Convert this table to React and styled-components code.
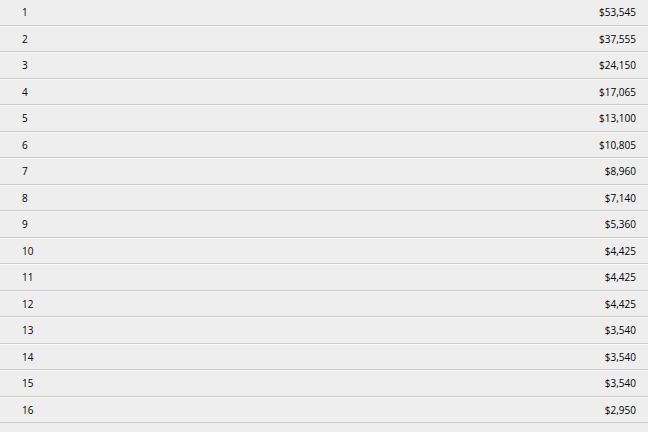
import React from 'react';
import styled, { createGlobalStyle } from "styled-components";

const payouts = [
    53545, 37555, 24150, 17065, 13100, 10805, 8960, 7140,
    5360, 4425, 4425, 4425, 3540, 3540, 3540, 2950,
];

const GlobalStyle = createGlobalStyle`
    body {
        margin: 0;
        background-color: #eeeeee;
        font-family: "Open Sans", "Liberation Sans", sans-serif;
    }
`;

const formatMoney = (n) => "$" + n.toLocaleString("en-US");

const App = () => {
    return (
        <>
            <GlobalStyle />
            <Table>
                <tbody>
                    {payouts.map((amount, idx) => (
                        <Row key={idx}>
                            <Place>{idx + 1}</Place>
                            <Amount>{formatMoney(amount)}</Amount>
                        </Row>
                    ))}
                </tbody>
            </Table>
        </>
    );
};

export default App;

const Table = styled.table`
    width: 100%;
    border-collapse: separate;
    border-spacing: 0;
    background-color: #eeeeee;
`;

const Row = styled.tr`
    height: 24.5px;

    & > td {
        border-bottom: 1px solid #cbcbcb;
        border-top: 1px solid #fafafa;
    }

    &:first-child > td {
        border-top: none;
    }
`;

const Cell = styled.td`
    padding: 0;
    font-size: 10px;
    color: #000;
    line-height: 24.5px;
`;

const Place = styled(Cell)`
    padding-left: 22px;
    text-align: left;
`;

const Amount = styled(Cell)`
    padding-right: 12px;
    text-align: right;
`;
